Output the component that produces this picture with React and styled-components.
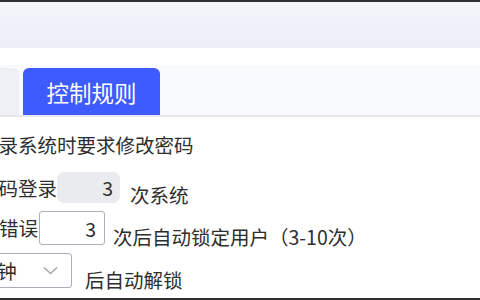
import React from "react"
import styled, { createGlobalStyle } from "styled-components"

const GlobalStyle = createGlobalStyle`
  html, body {
    margin: 0;
    padding: 0;
    background: #ffffff;
  }
  body {
    font-family: "Noto Sans CJK SC", "Noto Sans", sans-serif;
    color: #2e2e2e;
  }
`

const Frame = styled.div`
  width: 480px;
  height: 300px;
  box-sizing: border-box;
  border-top: 2px solid #2f2f2f;
  border-bottom: 2px solid #2f2f2f;
  overflow: hidden;
  background: #ffffff;
`

const Header = styled.div`
  height: 46px;
  background: linear-gradient(180deg, #f5f6f9 0%, #eff2fa 40%, #eceff8 100%);
`

const TabBar = styled.div`
  margin-top: 17px;
  height: 50px;
  display: flex;
  align-items: flex-end;
  gap: 4px;
  background: #f9fafe;
  border-bottom: 2px solid #e4e6eb;
`

const Tab = styled.div`
  height: 47px;
  width: ${props => props.$width}px;
  display: flex;
  align-items: center;
  justify-content: center;
  border-radius: ${props => (props.$active ? "6px 6px 0 0" : "0 6px 0 0")};
  background: ${props => (props.$active ? "#3d5bfe" : "#eef0f6")};
  color: #ffffff;
  font-size: 22.5px;
`

const Form = styled.div`
  display: flex;
  flex-direction: column;
  gap: 7px;
  padding-top: 16px;
  font-size: 19.5px;
  line-height: 20px;
`

const Row = styled.div`
  display: flex;
  align-items: center;
  white-space: nowrap;
  margin-left: ${props => props.$offset}px;
  height: ${props => props.$height}px;
  margin-bottom: ${props => props.$after || 0}px;
`

const Label = styled.span`
  margin-right: ${props => props.$gap || 0}px;
`

const Suffix = styled.span`
  align-self: flex-end;
  margin-left: ${props => props.$gap}px;
  margin-bottom: -2px;
`

const NumberBox = styled.input`
  box-sizing: border-box;
  width: ${props => props.$width}px;
  height: 100%;
  padding: 0 ${props => props.$pad}px 0 0;
  margin: 0;
  text-align: right;
  font: inherit;
  color: #2e2e2e;
  outline: none;
  border: ${props => (props.$disabled ? "none" : "1px solid #a9aeb8")};
  border-radius: ${props => (props.$disabled ? "7px" : "3px")};
  background: ${props => (props.$disabled ? "#e9ebef" : "#ffffff")};
`

const SelectBox = styled.div`
  box-sizing: border-box;
  width: 127px;
  height: 100%;
  display: flex;
  align-items: center;
  justify-content: space-between;
  padding: 0 13px 0 10px;
  border: 1px solid #a9aeb8;
  border-radius: 3px;
  background: #ffffff;
`

const Chevron = () => (
  <svg width="15" height="9" viewBox="0 0 15 9" fill="none">
    <path d="M1 1.5L7.5 7.5L14 1.5" stroke="#a3a7ae" strokeWidth="1.5" />
  </svg>
)

export default function App() {
  return (
    <>
      <GlobalStyle />
      <Frame>
        <Header />
        <TabBar>
          <Tab $width={19} />
          <Tab $width={137} $active>控制规则</Tab>
        </TabBar>
        <Form>
          <Row $offset={-60} $height={24} $after={8}>
            <Label>首次登录系统时要求修改密码</Label>
          </Row>
          <Row $offset={-21} $height={31} $after={1}>
            <Label>密码登录</Label>
            <NumberBox $width={63} $pad={7} $disabled readOnly value="3" />
            <Suffix $gap={10}>次系统</Suffix>
          </Row>
          <Row $offset={-40} $height={34} $after={1}>
            <Label $gap={1}>连续错误</Label>
            <NumberBox $width={66} $pad={8} readOnly value="3" />
            <Suffix $gap={8}>次后自动锁定用户（3-10次）</Suffix>
          </Row>
          <Row $offset={-55} $height={35}>
            <SelectBox>
              <span>30分钟</span>
              <Chevron />
            </SelectBox>
            <Suffix $gap={13}>后自动解锁</Suffix>
          </Row>
        </Form>
      </Frame>
    </>
  )
}
